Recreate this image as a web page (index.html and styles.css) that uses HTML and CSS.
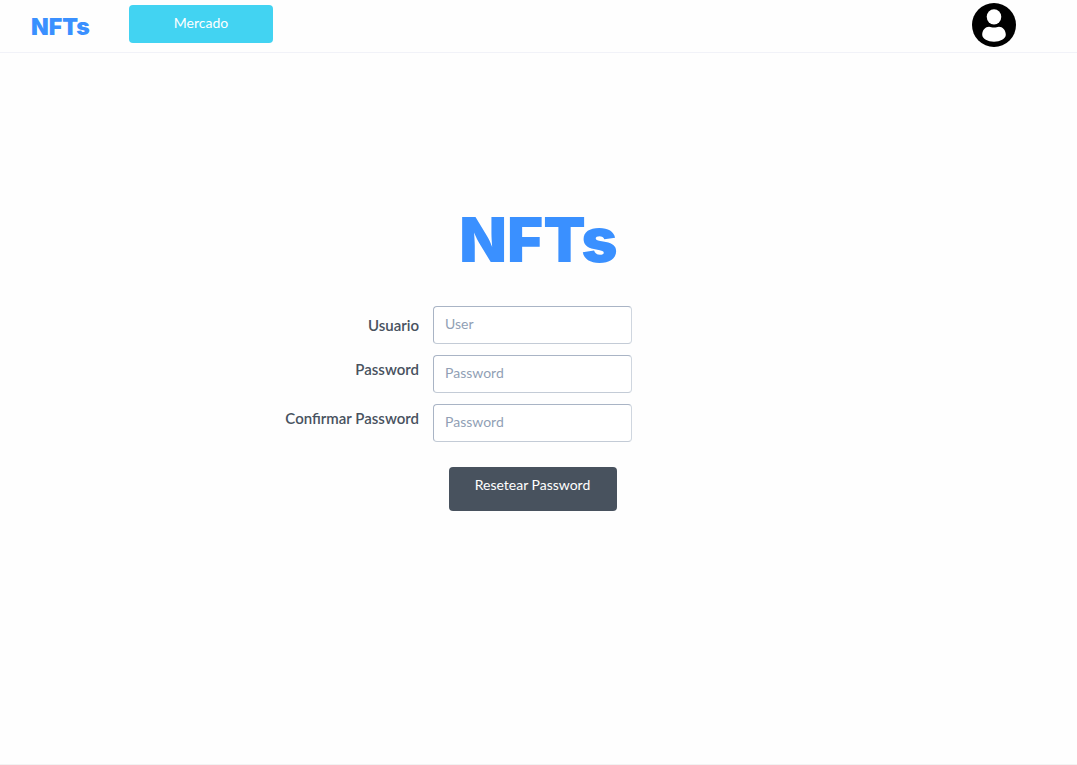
FILE: index.html
```html
<!DOCTYPE html>
<html lang="es">
<head>
<meta charset="utf-8">
<meta name="viewport" content="width=device-width, initial-scale=1">
<title>NFTs</title>
<link rel="stylesheet" href="styles.css">
</head>
<body>
<header class="topbar">
  <a class="brand" href="#">NFTs</a>
  <button class="market" type="button">Mercado</button>
  <button class="profile" type="button" aria-label="Perfil">
    <svg class="avatar" viewBox="0 0 44 44" aria-hidden="true">
      <circle cx="22" cy="22" r="22" fill="#000"/>
      <ellipse cx="22" cy="13.8" rx="7.3" ry="7.6" fill="#fff"/>
      <path d="M10.2 31.8C10.2 27 13.6 23.8 17 23.8C18.6 23.8 20 24.6 22 24.6C24 24.6 25.4 23.8 27 23.8C30.4 23.8 33.8 27 33.8 31.8C33.8 35.8 28 38.8 22 38.8C16 38.8 10.2 35.8 10.2 31.8Z" fill="#fff"/>
    </svg>
  </button>
</header>
<main class="page">
  <h1 class="logo">NFTs</h1>
  <form class="reset">
    <label class="label label-user" for="user">Usuario</label>
    <input class="field" id="user" type="text" placeholder="User">
    <label class="label" for="password">Password</label>
    <input class="field" id="password" type="password" placeholder="Password">
    <label class="label" for="confirm">Confirmar Password</label>
    <input class="field" id="confirm" type="password" placeholder="Password">
    <button class="submit" type="submit">Resetear Password</button>
  </form>
</main>
</body>
</html>
```

FILE: styles.css
```css
* {
  box-sizing: border-box;
}

body {
  margin: 0;
  min-height: 100vh;
  display: flex;
  flex-direction: column;
  background: #fefefe;
  border-bottom: 1px solid #f2f2f2;
  color: #48525e;
  font-family: Lato, "Open Sans", sans-serif;
  font-size: 15px;
  line-height: 20px;
}

button,
input {
  font: inherit;
}

.topbar {
  display: flex;
  align-items: flex-start;
  padding: 3px 61px 5px 31px;
  border-bottom: 1px solid #f1f2f8;
}

.brand {
  width: 98px;
  padding-top: 12px;
  color: #3a90ff;
  font-family: Inter, sans-serif;
  font-size: 23px;
  line-height: 24px;
  font-weight: 900;
  text-decoration: none;
}

.market {
  width: 144px;
  height: 38px;
  margin-top: 2px;
  padding: 0 0 2px;
  border: 0;
  border-radius: 4px;
  background: #42d3f2;
  color: #fff;
  font-size: 14px;
}

.profile {
  margin-left: auto;
  padding: 0;
  border: 0;
  background: none;
}

.avatar {
  display: block;
  width: 44px;
  height: 44px;
}

.page {
  flex: 1;
  padding-top: 151px;
}

.logo {
  margin: 0 0 30px;
  color: #3a90ff;
  font-family: Inter, sans-serif;
  font-size: 62px;
  line-height: 72px;
  font-weight: 900;
  text-align: center;
}

.reset {
  display: grid;
  grid-template-columns: 1fr 199px 1fr;
  gap: 11px 14px;
  padding-right: 12px;
}

.label {
  grid-column: 1;
  padding-top: 4px;
  font-weight: 600;
  text-align: right;
}

.label-user {
  padding-top: 9px;
}

.field {
  grid-column: 2;
  width: 100%;
  height: 38px;
  padding: 0 11px 3px;
  border: 1px solid;
  border-color: #a9b4c5 #cfd6df #c3cbd6 #a9b4c5;
  border-radius: 4px;
  background: #fff;
  color: #48525e;
  font-size: 14px;
}

.field::placeholder {
  color: #919fb5;
  opacity: 1;
}

.submit {
  grid-column: 2;
  justify-self: center;
  width: 168px;
  height: 44px;
  margin-top: 14px;
  padding: 0 0 8px;
  border: 0;
  border-radius: 4px;
  background: #48525e;
  color: #fff;
  font-size: 14px;
}
```
